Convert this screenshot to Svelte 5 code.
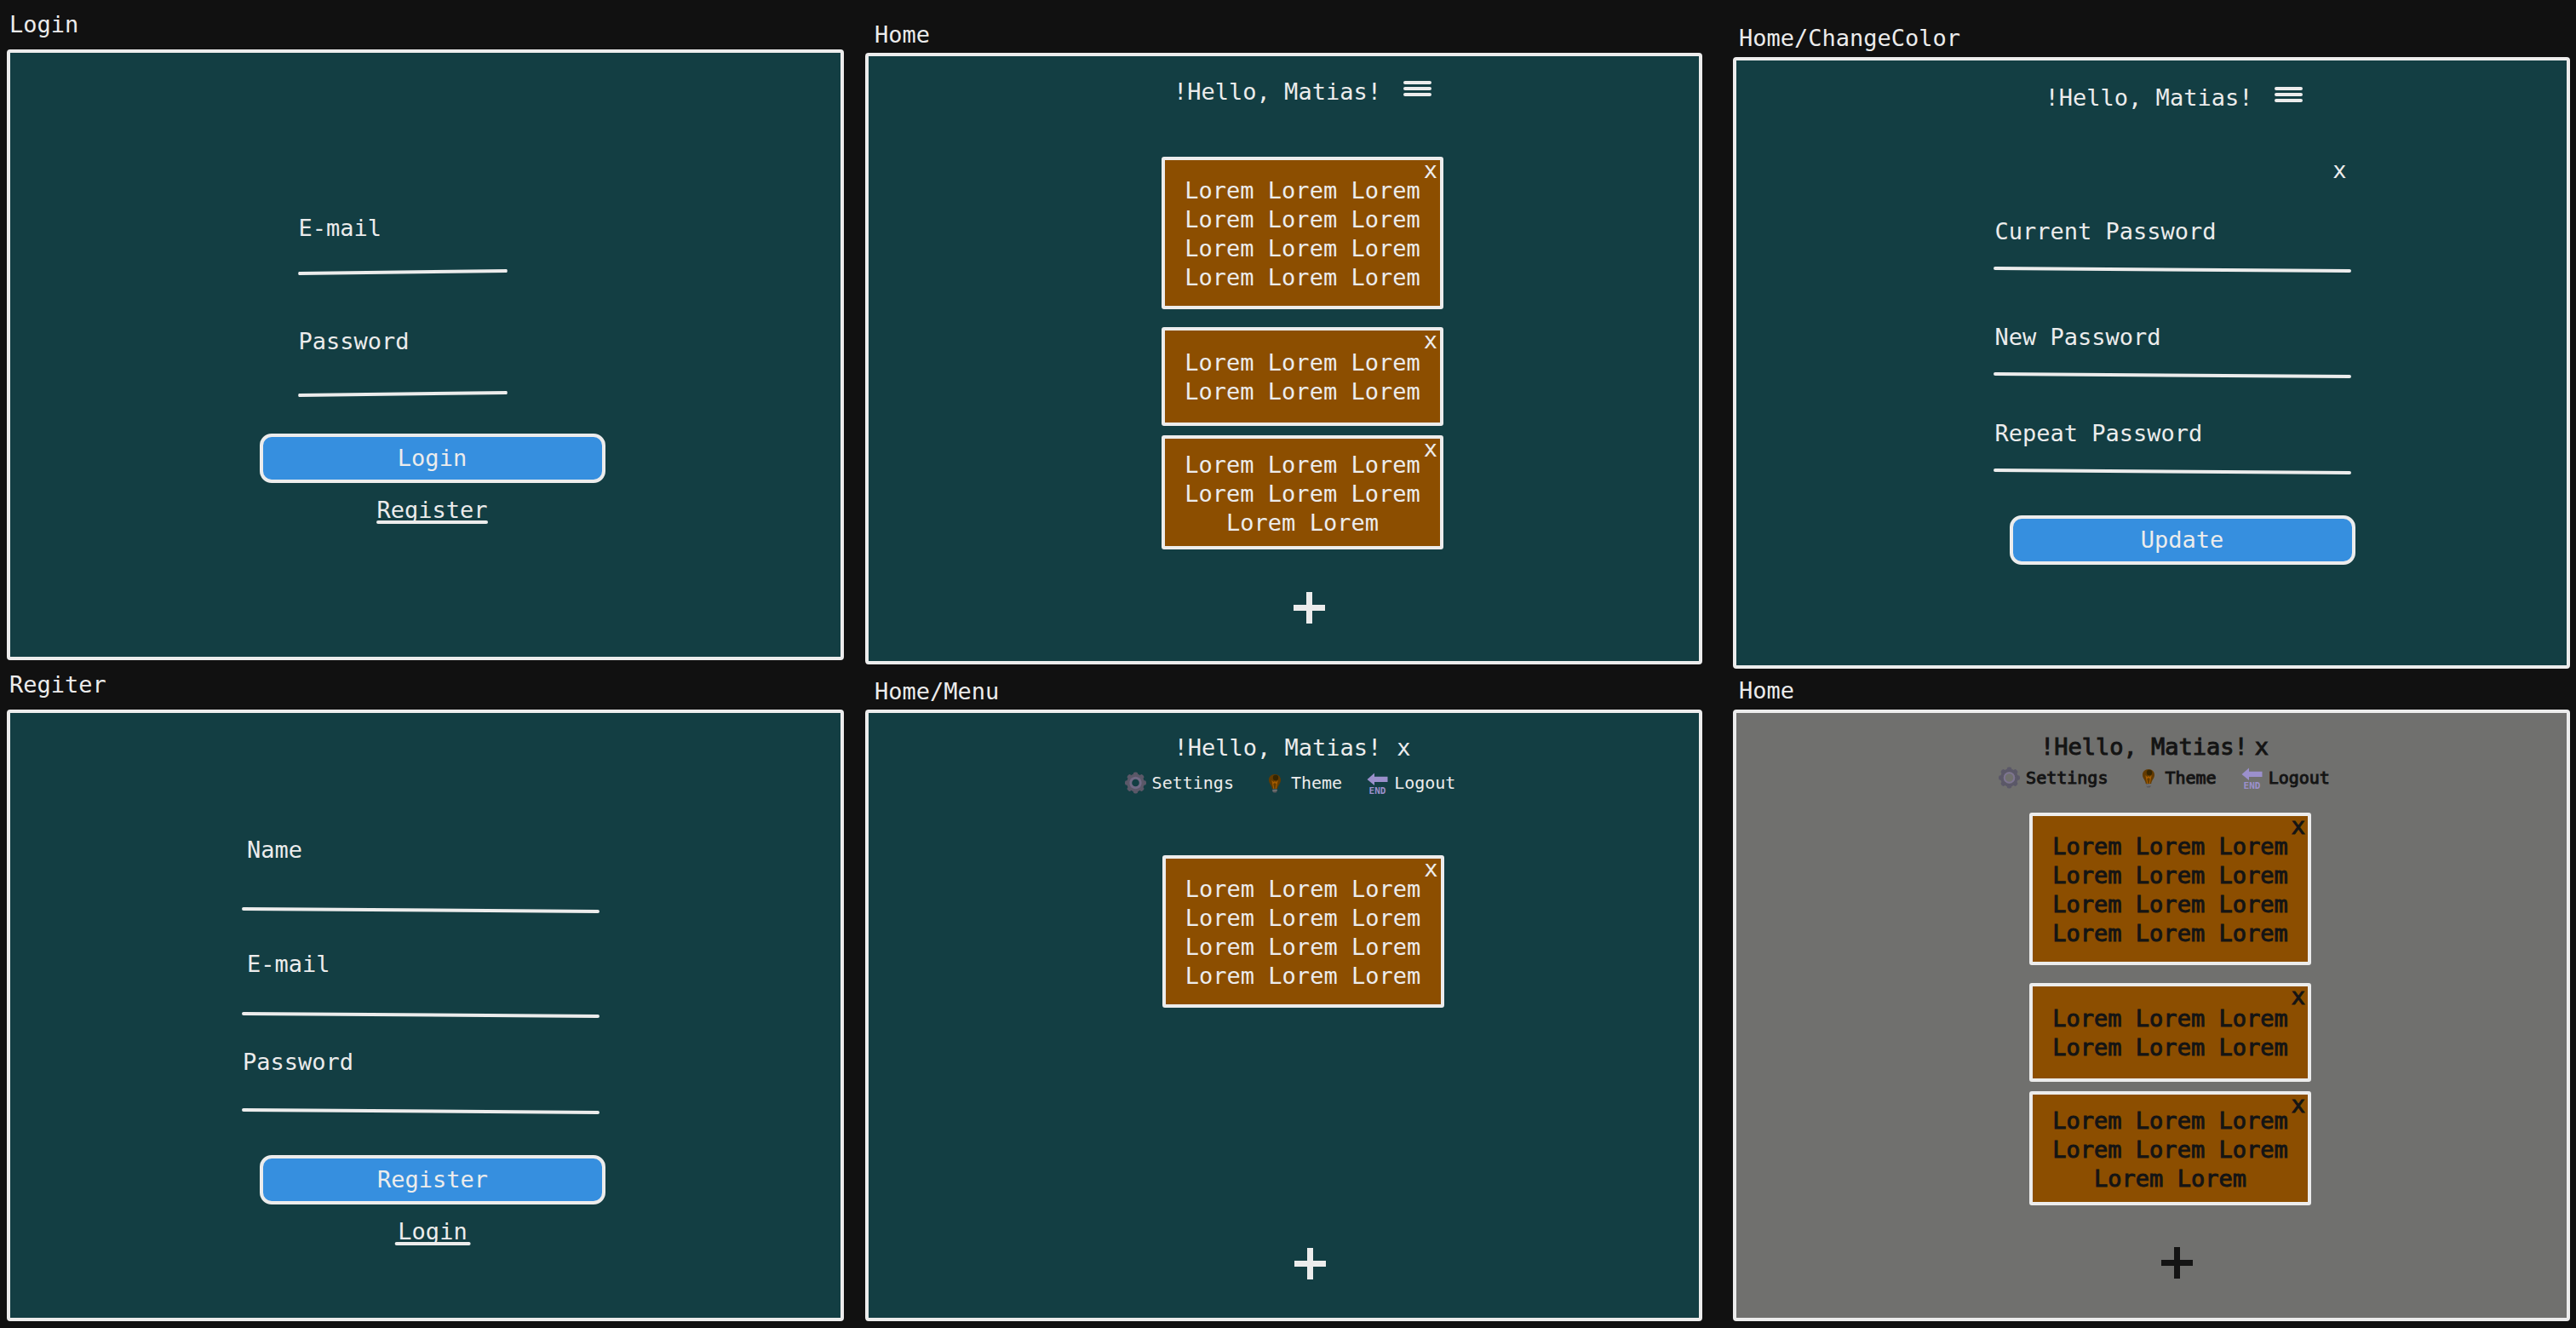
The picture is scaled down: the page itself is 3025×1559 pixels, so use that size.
<script>
  const menuItems = ['Settings', 'Theme', 'Logout'];
  const notes = [12, 6, 8];
  const lorem = (count) => Array(count).fill('Lorem').join(' ');
</script>

{#snippet field(id, label, type, rising = false)}
  <div class="field">
    <label for={id}>{label}</label>
    <input {id} {type} />
    <svg class="rule" viewBox="0 0 420 7" preserveAspectRatio="none" aria-hidden="true">
      {#if rising}
        <line x1="4" y1="5" x2="416" y2="2" />
      {:else}
        <line x1="2" y1="2" x2="418" y2="5" />
      {/if}
    </svg>
  </div>
{/snippet}

{#snippet greeting(open)}
  <header class="greeting" class:open>
    <h2>!Hello, Matias!</h2>
    {#if open}
      <button class="plain close" type="button" aria-label="Close menu">x</button>
    {:else}
      <button class="plain burger" type="button" aria-label="Open menu">
        <svg width="33" height="20" viewBox="0 0 33 20">
          <path d="M2 3H31M2 10H31M2 17H31" />
        </svg>
      </button>
    {/if}
  </header>
{/snippet}

{#snippet icon(name)}
  {#if name === 'Settings'}
    <svg width="25" height="26" viewBox="0 0 25 26" aria-hidden="true">
      <g class="teeth">
        {#each [0, 45, 90, 135] as turn}
          <rect x="9.8" y="0.5" width="5.4" height="25" rx="2" transform="rotate({turn} 12.5 13)" />
        {/each}
      </g>
      <circle class="hub" cx="12.5" cy="13" r="6.8" />
      <circle class="teeth-ring" cx="12.5" cy="13" r="8.9" />
      <circle class="ring" cx="12.5" cy="13" r="5.8" />
    </svg>
  {:else if name === 'Theme'}
    <svg width="31" height="26" viewBox="0 0 31 26" aria-hidden="true">
      <path d="M19 3C14.600 3 12 6 12 9.700C12 14 15.500 15.500 15.800 20H22.200C22.500 15.500 26 14 26 9.700C26 6 23.400 3 19 3Z" fill="#633b00" />
      <path d="M17.800 20L16.200 11.500L18 13L19 11.500L20 13L21.800 11.500L20.200 20" fill="none" stroke="#a35b00" stroke-width="1.200" />
      <circle cx="20" cy="7" r="3.200" fill="#352500" />
      <path d="M16.300 20.500H21.700V23L20.500 24.500H17.500L16.300 23Z" fill="#59595c" />
      <path d="M16.300 22.300L21.700 21.500" stroke="#8a8a8a" stroke-width="0.800" />
    </svg>
  {:else}
    <svg class="exit" width="25" height="30" viewBox="0 0 25 30" aria-hidden="true">
      <path d="M0.500 9L9 1.500V5.800H24.500V12H9V16Z" fill="#9b90cc" />
      <text x="12.500" y="26" text-anchor="middle">END</text>
    </svg>
  {/if}
{/snippet}

{#snippet menu()}
  <nav class="menu" aria-label="Account">
    {#each menuItems as item}
      <a href="#{item.toLowerCase()}">{@render icon(item)}{item}</a>
    {/each}
  </nav>
{/snippet}

{#snippet note(count)}
  <article class="note" class:medium={count === 8} class:short={count === 6}>
    <button class="plain dismiss" type="button" aria-label="Delete note">x</button>
    <p>{lorem(count)}</p>
  </article>
{/snippet}

{#snippet add()}
  <button class="plain add" type="button" aria-label="Add note">
    <svg width="37" height="37" viewBox="0 0 37 37"><path d="M18.500 0V37M0 18.500H37" /></svg>
  </button>
{/snippet}

<main class="board">
  <div class="column first">
    <section class="frame">
      <h1>Login</h1>
      <div class="screen login">
        <form>
          {@render field('login-email', 'E-mail', 'email', true)}
          {@render field('login-password', 'Password', 'password', true)}
          <button class="submit" type="button">Login</button>
          <a class="switch" href="#register">Register</a>
        </form>
      </div>
    </section>
    <section class="frame">
      <h1>Regiter</h1>
      <div class="screen register" id="register">
        <form>
          {@render field('register-name', 'Name', 'text')}
          {@render field('register-email', 'E-mail', 'email')}
          {@render field('register-password', 'Password', 'password')}
          <button class="submit" type="button">Register</button>
          <a class="switch wide" href="#login">Login</a>
        </form>
      </div>
    </section>
  </div>

  <div class="column second">
    <section class="frame">
      <h1>Home</h1>
      <div class="screen home">
        {@render greeting(false)}
        <div class="notes">
          {#each notes as count}{@render note(count)}{/each}
        </div>
        {@render add()}
      </div>
    </section>
    <section class="frame">
      <h1>Home/Menu</h1>
      <div class="screen home with-menu">
        {@render greeting(true)}
        {@render menu()}
        <div class="notes">{@render note(12)}</div>
        {@render add()}
      </div>
    </section>
  </div>

  <div class="column third">
    <section class="frame">
      <h1>Home/ChangeColor</h1>
      <div class="screen change">
        {@render greeting(false)}
        <form>
          <button class="plain cancel" type="button" aria-label="Cancel">x</button>
          {@render field('current-password', 'Current Password', 'password')}
          {@render field('new-password', 'New Password', 'password')}
          {@render field('repeat-password', 'Repeat Password', 'password')}
          <button class="submit" type="button">Update</button>
        </form>
      </div>
    </section>
    <section class="frame">
      <h1>Home</h1>
      <div class="screen home gray">
        {@render greeting(true)}
        {@render menu()}
        <div class="notes">
          {#each notes as count}{@render note(count)}{/each}
        </div>
        {@render add()}
      </div>
    </section>
  </div>
</main>

<style>
  :global(body) {
    background: #111111;
  }

  .board {
    --ink: #ececec;
    display: flex;
    box-sizing: border-box;
    padding: 0 7px 6px 8px;
    color: var(--ink);
    font: 27px/34px 'DejaVu Sans Mono', 'Liberation Mono', monospace;
  }

  .board * {
    box-sizing: border-box;
  }

  .column {
    display: flex;
    flex: 1 1 0;
    flex-direction: column;
    min-width: 460px;
  }

  .first {
    gap: 12px;
    padding-top: 12px;
  }

  .second {
    gap: 15px;
    margin-left: 25px;
    padding-top: 24px;
  }

  .third {
    gap: 9px;
    margin-left: 36px;
    padding-top: 28px;
  }

  h1,
  h2,
  p {
    margin: 0;
    font: inherit;
  }

  .first h1 {
    padding: 0 0 12px 3px;
  }

  .second h1 {
    padding: 0 0 4px 11px;
  }

  .third h1 {
    padding: 0 0 5px 7px;
  }

  .screen {
    display: flex;
    flex-direction: column;
    align-items: center;
    background: #133e43;
    border: 4px solid #ececec;
    border-radius: 4px;
  }

  button,
  input {
    color: inherit;
    font: inherit;
  }

  .plain {
    display: block;
    padding: 0;
    background: none;
    border: 0;
    cursor: pointer;
  }

  svg {
    display: block;
    flex: none;
  }

  /* Forms */
  form {
    display: flex;
    flex-direction: column;
    align-items: flex-start;
  }

  .field {
    display: flex;
    flex-direction: column;
    width: 100%;
  }

  .field label {
    padding-left: 2px;
  }

  .field input {
    width: 100%;
    height: 24px;
    padding: 0 4px;
    background: none;
    border: 0;
    outline: 0;
  }

  .rule {
    width: 100%;
    height: 7px;
    stroke: var(--ink);
    stroke-width: 4;
    stroke-linecap: round;
  }

  .submit {
    align-self: flex-end;
    width: 406px;
    height: 58px;
    padding: 0;
    background: #368fdf;
    border: 4px solid var(--ink);
    border-radius: 14px;
    cursor: pointer;
  }

  .switch {
    position: relative;
    align-self: flex-end;
    margin: 15px 203px 0 0;
    color: inherit;
    text-decoration: none;
    transform: translateX(50%);
  }

  .switch::after {
    position: absolute;
    right: 0;
    bottom: 1px;
    left: 0;
    height: 4px;
    background: var(--ink);
    border-radius: 2px;
    content: '';
  }

  .switch.wide {
    padding: 0 4px;
  }

  .login {
    padding: 189px 0 155px 16px;
  }

  .login form {
    width: 406px;
  }

  .login .field {
    width: 248px;
    margin: 0 0 61px 44px;
  }

  .login .field input {
    height: 31px;
  }

  .login .field:nth-of-type(2) {
    margin-bottom: 43px;
  }

  .login .field:nth-of-type(2) input {
    height: 41px;
  }

  .register {
    padding: 144px 4px 84px 0;
  }

  .register form {
    width: 427px;
  }

  .register .field {
    width: 420px;
    margin-bottom: 43px;
  }

  .register .field label {
    padding-left: 6px;
  }

  .register .field input {
    height: 50px;
  }

  .register .field:nth-of-type(2) {
    margin-bottom: 35px;
  }

  .register .field:nth-of-type(2) input {
    height: 39px;
  }

  .register .field:nth-of-type(3) {
    margin-bottom: 48px;
  }

  .register .field:nth-of-type(3) label {
    padding-left: 1px;
  }

  .register .field:nth-of-type(3) input {
    height: 37px;
  }

  .change {
    padding: 27px 0 118px 53px;
  }

  .change form {
    width: 425px;
    margin-top: 51px;
  }

  .cancel {
    align-self: flex-end;
    margin: 0 10px 38px 0;
  }

  .change .field {
    width: 420px;
    margin-bottom: 48px;
  }

  .change .field:nth-of-type(1) {
    margin-bottom: 59px;
  }

  /* Home */
  .greeting {
    display: flex;
    gap: 26px;
    align-items: flex-start;
  }

  .greeting.open {
    gap: 18px;
  }

  .burger {
    padding-top: 3px;
  }

  .burger path {
    fill: none;
    stroke: var(--ink);
    stroke-width: 4;
    stroke-linecap: round;
  }

  .home {
    padding: 25px 0 44px 44px;
  }

  .notes {
    display: flex;
    flex-direction: column;
    margin: 59px 0 50px;
  }

  .note {
    position: relative;
    width: 331px;
    padding: 19px 20px 16px;
    background: #8c4e00;
    border: 4px solid #ececec;
    border-radius: 3px;
    text-align: center;
  }

  .note.short {
    margin: 21px 0 11px;
    padding: 21px 20px 19px;
  }

  .note.medium {
    padding: 14px 20px 10px;
  }

  .dismiss {
    position: absolute;
    top: 2px;
    right: 3px;
    line-height: 20px;
  }

  .add {
    margin-left: 16px;
  }

  .add path {
    stroke: var(--ink);
    stroke-width: 7;
  }

  .menu {
    display: flex;
    gap: 29px;
    font-size: 20px;
    line-height: 26px;
  }

  .menu a {
    display: flex;
    gap: 7px;
    height: 26px;
    color: inherit;
    text-decoration: none;
  }

  .teeth {
    fill: #5b5868;
  }

  .hub {
    fill: #133e43;
  }

  .teeth-ring {
    fill: none;
    stroke: #5b5868;
    stroke-width: 3;
  }

  .ring {
    fill: none;
    stroke: #706984;
    stroke-width: 3;
  }

  .menu text {
    fill: #9b90cc;
    font: bold 11px 'DejaVu Sans Mono', monospace;
    -webkit-text-stroke: 0;
  }

  .with-menu {
    padding: 24px 0 45px;
  }

  .with-menu .greeting {
    margin-left: 20px;
  }

  .with-menu .menu {
    margin: 11px 0 0 15px;
  }

  .with-menu .notes {
    margin: 72px 0 282px 45px;
  }

  .with-menu .add {
    margin-left: 61px;
  }

  .gray {
    --ink: #141414;
    padding: 23px 0 46px;
    background: #70706e;
    color: var(--ink);
    -webkit-text-stroke: 1px var(--ink);
  }

  .gray .greeting.open {
    gap: 8px;
    margin-left: 7px;
  }

  .gray .menu {
    margin: 6px 0 0 30px;
  }

  .gray .hub {
    fill: #70706e;
  }

  .gray .ring {
    stroke: #7d7491;
    stroke-width: 2;
  }

  .gray .notes {
    margin: 28px 0 49px 44px;
  }

  .gray .add {
    margin-left: 60px;
  }
</style>
